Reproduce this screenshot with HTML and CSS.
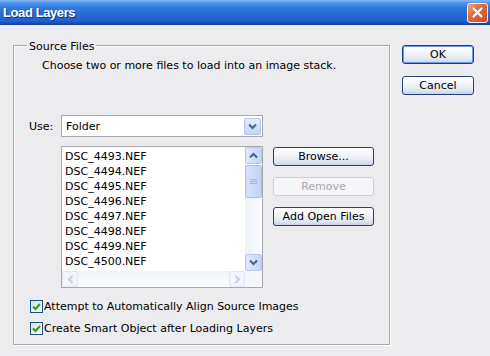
FILE: index.html
```html
<!DOCTYPE html>
<html lang="en">

<head>
    <meta charset="UTF-8">
    <meta name="viewport" content="width=device-width, initial-scale=1.0">
    <title>Load Layers</title>
    <link rel="stylesheet" href="styles.css">
</head>

<body>
    <div class="window">
        <div class="titlebar">
            <span class="title">Load Layers</span>
            <button class="close" aria-label="Close">
                <svg width="13" height="13" viewBox="0 0 13 13">
                    <path d="M2.5 2.5 L10.5 10.5 M10.5 2.5 L2.5 10.5" stroke="#fff" stroke-width="2.2" stroke-linecap="round" />
                </svg>
            </button>
        </div>

        <div class="dialog">
            <fieldset class="group">
                <legend>Source Files</legend>
                <p class="desc">Choose two or more files to load into an image stack.</p>

                <div class="use-row">
                    <label class="use-label">Use:</label>
                    <div class="select">
                        <span class="select-value">Folder</span>
                        <span class="drop">
                            <svg width="9" height="7" viewBox="0 0 9 7">
                                <polyline points="1,1.5 4.5,5 8,1.5" fill="none" stroke="#4d6185" stroke-width="2" />
                            </svg>
                        </span>
                    </div>
                </div>

                <div class="files-row">
                    <div class="listbox">
                        <ul class="items">
                            <li>DSC_4493.NEF</li>
                            <li>DSC_4494.NEF</li>
                            <li>DSC_4495.NEF</li>
                            <li>DSC_4496.NEF</li>
                            <li>DSC_4497.NEF</li>
                            <li>DSC_4498.NEF</li>
                            <li>DSC_4499.NEF</li>
                            <li>DSC_4500.NEF</li>
                        </ul>
                        <div class="vscroll">
                            <span class="sb-btn">
                                <svg width="9" height="7" viewBox="0 0 9 7">
                                    <polyline points="1,5.5 4.5,2 8,5.5" fill="none" stroke="#4d6185" stroke-width="2" />
                                </svg>
                            </span>
                            <span class="thumb">
                                <svg width="7" height="7" viewBox="0 0 7 7">
                                    <path d="M0 1.5 H7 M0 3.5 H7 M0 5.5 H7" stroke="#a7b3cb" stroke-width="1" />
                                </svg>
                            </span>
                            <span class="track"></span>
                            <span class="sb-btn">
                                <svg width="9" height="7" viewBox="0 0 9 7">
                                    <polyline points="1,1.5 4.5,5 8,1.5" fill="none" stroke="#4d6185" stroke-width="2" />
                                </svg>
                            </span>
                        </div>
                        <div class="hscroll">
                            <span class="sb-btn off">
                                <svg width="7" height="9" viewBox="0 0 7 9">
                                    <polyline points="5.5,1 2,4.5 5.5,8" fill="none" stroke="#c9d1e1" stroke-width="2" />
                                </svg>
                            </span>
                            <span class="track"></span>
                            <span class="sb-btn off">
                                <svg width="7" height="9" viewBox="0 0 7 9">
                                    <polyline points="1.5,1 5,4.5 1.5,8" fill="none" stroke="#c9d1e1" stroke-width="2" />
                                </svg>
                            </span>
                        </div>
                        <div class="corner"></div>
                    </div>

                    <div class="side-buttons">
                        <button class="btn">Browse...</button>
                        <button class="btn" disabled>Remove</button>
                        <button class="btn">Add Open Files</button>
                    </div>
                </div>

                <label class="check">
                    <span class="box">
                        <svg width="11" height="11" viewBox="0 0 11 11">
                            <polyline points="2,5.5 4.5,8 9,3" fill="none" stroke="#21a121" stroke-width="2" />
                        </svg>
                    </span>
                    Attempt to Automatically Align Source Images
                </label>
                <label class="check second">
                    <span class="box">
                        <svg width="11" height="11" viewBox="0 0 11 11">
                            <polyline points="2,5.5 4.5,8 9,3" fill="none" stroke="#21a121" stroke-width="2" />
                        </svg>
                    </span>
                    Create Smart Object after Loading Layers
                </label>
            </fieldset>

            <div class="actions">
                <button class="btn default">OK</button>
                <button class="btn">Cancel</button>
            </div>
        </div>
    </div>
</body>

</html>
```

FILE: styles.css
```css
* {
    box-sizing: border-box;
}

body {
    margin: 0;
    font-family: "DejaVu Sans", Tahoma, sans-serif;
    font-size: 11px;
    color: #000;
    background: #ecebee;
}

.window {
    width: 490px;
    height: 356px;
    background: #ecebee;
    overflow: hidden;
}

/* title bar */

.titlebar {
    height: 25px;
    display: flex;
    align-items: center;
    justify-content: space-between;
    padding: 0 2px 0 3px;
    background: linear-gradient(to bottom, #86baf5 0, #4f93ec 3px, #3079e0 8px, #2867d2 15px, #2261cc 21px, #1b4fb2 23px, #143e92 25px);
}

.title {
    font-family: "Liberation Sans", Arial, sans-serif;
    font-weight: bold;
    font-size: 13px;
    letter-spacing: -0.4px;
    color: #fff;
    text-shadow: 1px 1px 0 #0e3582;
}

.close {
    width: 21px;
    height: 20px;
    padding: 0;
    border: 1px solid #f4f4f4;
    border-radius: 3px;
    background: linear-gradient(135deg, #f3a07c 0%, #e4643c 45%, #cc4a24 100%);
    display: flex;
    align-items: center;
    justify-content: center;
}

/* dialog body */

.dialog {
    display: flex;
    align-items: flex-start;
    padding-left: 13px;
}

.group {
    width: 377px;
    margin: 11px 0 0;
    padding: 0 0 8px;
    min-inline-size: 0;
    border: 1px solid #a9a8ad;
    box-shadow: 1px 1px 0 #fff, inset 1px 1px 0 #fff;
}

.group legend {
    margin-left: 13px;
    padding: 4px 2px 0;
    line-height: 14px;
    background: #ecebee;
}

.desc {
    margin: 5px 0 0 28px;
    line-height: 14px;
}

.use-row {
    display: flex;
    align-items: center;
    margin-top: 42px;
    padding-left: 15px;
}

.use-label {
    width: 32px;
}

.select {
    width: 202px;
    height: 22px;
    display: flex;
    align-items: center;
    padding: 0 1px 0 4px;
    border: 1px solid #a5a9b0;
    background: #fff;
}

.select-value {
    flex: 1;
}

.drop {
    width: 17px;
    height: 17px;
    display: flex;
    align-items: center;
    justify-content: center;
    border: 1px solid #b4c4e8;
    border-radius: 2px;
    background: linear-gradient(to bottom, #e4ecfc, #c4d5f7);
}

/* file list */

.files-row {
    display: flex;
    align-items: flex-start;
    margin-top: 9px;
    padding-left: 47px;
}

.listbox {
    width: 202px;
    height: 142px;
    display: grid;
    grid-template-columns: 1fr 17px;
    grid-template-rows: 1fr 16px;
    border: 1px solid #a6a9b0;
    background: #fff;
}

.items {
    margin: 0;
    padding: 2px 0 0 3px;
    list-style: none;
    line-height: 15px;
    overflow: hidden;
}

.vscroll {
    display: flex;
    flex-direction: column;
    background: linear-gradient(to right, #eef2fa, #fcfdff);
}

.hscroll {
    display: flex;
    background: linear-gradient(to bottom, #f1f4fa, #fcfdff);
}

.corner {
    background: #f6f7fa;
}

.track {
    flex: 1;
}

.sb-btn {
    width: 17px;
    height: 17px;
    display: flex;
    align-items: center;
    justify-content: center;
    border: 1px solid #b6c7ec;
    border-radius: 2px;
    background: linear-gradient(to right, #dfe8fd, #c5d5f8);
}

.hscroll .sb-btn {
    width: 16px;
    height: 16px;
}

.sb-btn.off {
    border-color: #e1e7f3;
    background: #f2f5fb;
}

.thumb {
    height: 33px;
    margin-top: 1px;
    display: flex;
    align-items: center;
    justify-content: center;
    border: 1px solid #aebfe8;
    border-radius: 2px;
    background: linear-gradient(to right, #d6e2fc, #c2d3f8);
}

.side-buttons {
    display: flex;
    flex-direction: column;
    gap: 11px;
    margin: 1px 0 0 10px;
}

/* buttons */

.btn {
    width: 101px;
    height: 19px;
    padding: 0;
    font: inherit;
    color: #000;
    border: 1px solid #23407b;
    border-radius: 3px;
    background: linear-gradient(to bottom, #ffffff 0%, #f4f5f9 40%, #dfe5f0 80%, #c8d2e6 100%);
}

.btn:disabled {
    color: #a8a8a8;
    border-color: #cfd0d6;
    background: #f6f6f8;
}

.btn.default {
    border-color: #1d3c7c;
    box-shadow: inset 0 0 0 1px #6d98e3;
}

.actions {
    display: flex;
    flex-direction: column;
    gap: 12px;
    margin: 20px 0 0 12px;
}

.actions .btn {
    width: 72px;
}

/* checkboxes */

.check {
    display: flex;
    align-items: center;
    gap: 1px;
    height: 16px;
    margin-top: 10px;
    padding-left: 16px;
}

.check.second {
    margin-top: 6px;
}

.box {
    width: 13px;
    height: 13px;
    display: flex;
    align-items: center;
    justify-content: center;
    border: 1px solid #1c5180;
    background: linear-gradient(135deg, #dcdcd7, #ffffff);
}
```
